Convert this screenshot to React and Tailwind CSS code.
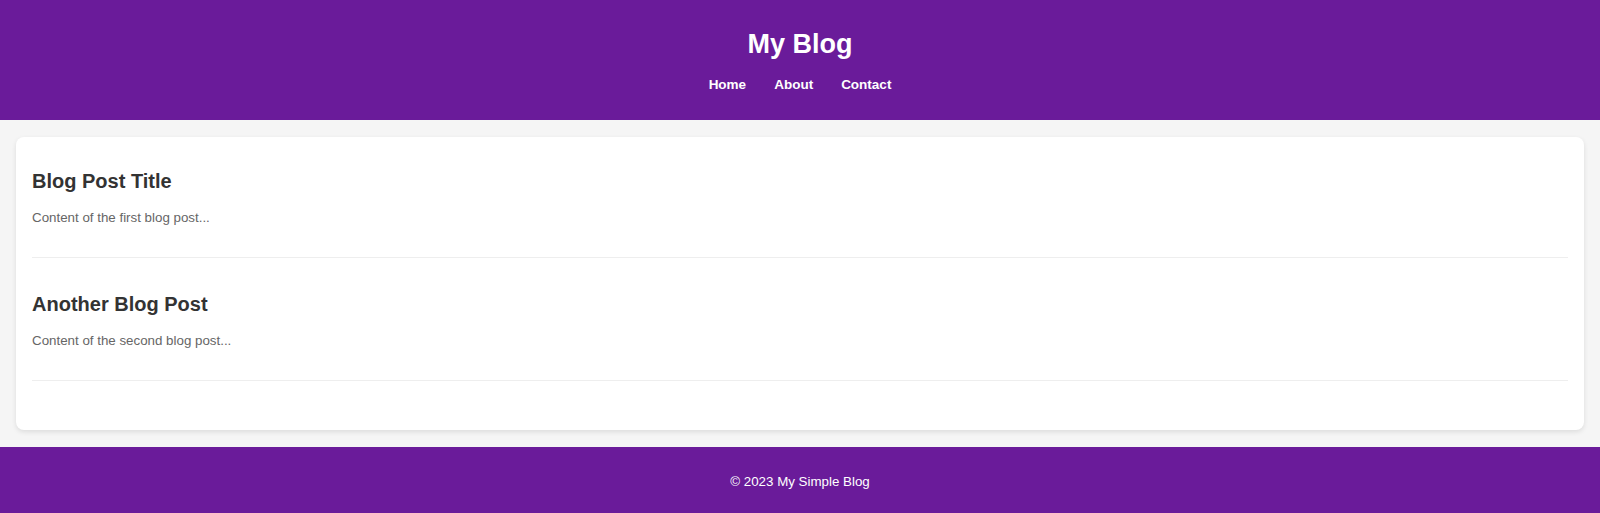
export default function App() {
  const posts = [
    { id: 1, title: "Blog Post Title", body: "Content of the first blog post..." },
    { id: 2, title: "Another Blog Post", body: "Content of the second blog post..." },
  ]

  return (
    <div className="min-h-screen bg-[#f5f5f5] font-['Liberation_Sans',Arial,sans-serif]">
      {/* Header */}
      <header className="bg-[#6a1b9a] text-white text-center pt-[29px] pb-[27px]">
        <h1 className="text-[27px] leading-[31px] font-bold">My Blog</h1>
        <nav className="mt-[17px] flex justify-center gap-[28px] text-[13.5px] leading-[16px] font-bold">
          <a href="#">Home</a>
          <a href="#">About</a>
          <a href="#">Contact</a>
        </nav>
      </header>

      {/* Posts */}
      <main className="pt-[17px] pb-[17px] px-4">
        <div className="bg-white rounded-lg shadow-[0_2px_5px_rgba(0,0,0,0.1)] px-4 pt-4 pb-[31px]">
          {posts.map((post) => (
            <article key={post.id} className="border-b border-[#eeeeee] pt-[17px] pb-[32px] mb-[18px]">
              <h2 className="text-[20px] leading-[23px] font-bold text-[#333333]">{post.title}</h2>
              <p className="mt-[17px] text-[13.33px] leading-[15px] text-[#666666]">{post.body}</p>
            </article>
          ))}
        </div>
      </main>

      {/* Footer */}
      <footer className="bg-[#6a1b9a] text-white text-center text-[13.33px] leading-[15px] pt-[27px] pb-[24px]">
        © 2023 My Simple Blog
      </footer>
    </div>
  )
}
